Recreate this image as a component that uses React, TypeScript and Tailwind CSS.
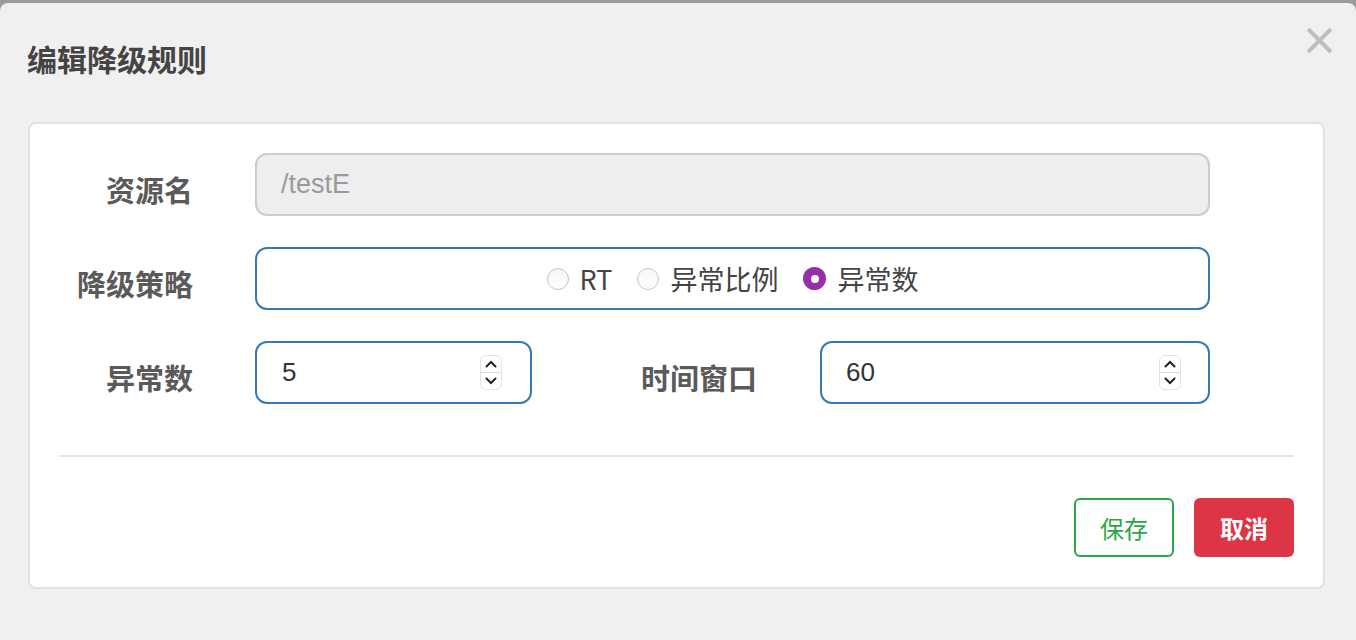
const cjk = { fontFamily: '"Noto Sans CJK SC", "Liberation Sans", sans-serif' }
const latin = { fontFamily: '"Liberation Sans", "Noto Sans CJK SC", sans-serif' }

function Radio({ checked, label }: { checked?: boolean; label: string }) {
  return (
    <label className="flex items-center gap-[11px]">
      {checked ? (
        <span className="flex h-[23px] w-[23px] items-center justify-center rounded-full bg-[#9630a9]">
          <span className="h-[8px] w-[8px] rounded-full bg-white" />
        </span>
      ) : (
        <span className="h-[22px] w-[22px] rounded-full border border-[#c4c4c4] bg-gradient-to-b from-[#f6f6f6] to-white" />
      )}
      <span className="text-[27px] leading-none text-[#444]" style={cjk}>
        {label}
      </span>
    </label>
  )
}

function Spinner() {
  return (
    <div className="flex h-[35px] w-[22px] flex-col overflow-hidden rounded-[6px] border border-[#e2e2e2] bg-white">
      <div className="flex flex-1 items-center justify-center border-b border-[#dcdcdc]">
        <svg width="12" height="8" viewBox="0 0 12 8" fill="none">
          <path d="M1.5 6.5 6 2l4.5 4.5" stroke="#222" strokeWidth="2" strokeLinecap="round" />
        </svg>
      </div>
      <div className="flex flex-1 items-center justify-center">
        <svg width="12" height="8" viewBox="0 0 12 8" fill="none">
          <path d="M1.5 1.5 6 6l4.5-4.5" stroke="#222" strokeWidth="2" strokeLinecap="round" />
        </svg>
      </div>
    </div>
  )
}

function Label({ text, width }: { text: string; width: string }) {
  return (
    <div className={`${width} shrink-0 pt-[10px] text-right text-[29px] font-bold leading-none text-[#5a5a5a]`} style={cjk}>
      {text}
    </div>
  )
}

export default function App() {
  return (
    <div className="min-h-[640px] bg-[#9b9b9b] pt-[3px]">
      <div className="relative h-[637px] rounded-t-[8px] bg-[#f0f0f0]">
        {/* close button */}
        <button className="absolute right-[24px] top-[25px]">
          <svg width="25" height="25" viewBox="0 0 25 25">
            <path d="M2.5 2.5l20 20M22.5 2.5l-20 20" stroke="#bdbdbd" strokeWidth="4" strokeLinecap="square" />
          </svg>
        </button>

        <div className="pl-[27px] pt-[40px]">
          <h4 className="text-[30px] font-bold leading-[30px] text-[#444]" style={cjk}>
            编辑降级规则
          </h4>
        </div>

        <div className="ml-[28px] mt-[49px] w-[1297px] rounded-[8px] border-2 border-[#e2e2e2] bg-white px-[29px] pb-[30px] pt-[29px]">
          <div className="flex flex-col gap-[31px]">
            <div className="flex items-center gap-[62px]">
              <Label text="资源名" width="w-[134px]" />
              <div
                className="flex h-[63px] w-[955px] items-center rounded-[12px] border-2 border-[#cccccc] bg-[#eeeeee] px-[24px] text-[27px] text-[#9a9a9a]"
                style={latin}
              >
                /testE
              </div>
            </div>

            <div className="flex items-center gap-[62px]">
              <Label text="降级策略" width="w-[134px]" />
              <div className="flex h-[63px] w-[955px] items-center justify-center gap-[25px] rounded-[12px] border-2 border-[#337ab7] bg-white">
                <Radio label="RT" />
                <Radio label="异常比例" />
                <Radio checked label="异常数" />
              </div>
            </div>

            <div className="flex items-center">
              <Label text="异常数" width="w-[134px]" />
              <div
                className="ml-[62px] flex h-[63px] w-[277px] items-center justify-between rounded-[12px] border-2 border-[#337ab7] bg-white pl-[25px] pr-[28px] text-[26px] text-[#333]"
                style={latin}
              >
                <span>5</span>
                <Spinner />
              </div>
              <Label text="时间窗口" width="w-[225px]" />
              <div
                className="ml-[63px] flex h-[63px] w-[390px] items-center justify-between rounded-[12px] border-2 border-[#337ab7] bg-white pl-[24px] pr-[27px] text-[26px] text-[#333]"
                style={latin}
              >
                <span>60</span>
                <Spinner />
              </div>
            </div>
          </div>

          <div className="mt-[51px] h-[2px] w-full bg-[#e5e5e5]" />

          <div className="mt-[41px] flex justify-end gap-[20px]">
            <button
              className="h-[59px] w-[100px] rounded-[6px] border-2 border-[#28a745] bg-white text-[24px] text-[#28a745]"
              style={cjk}
            >
              保存
            </button>
            <button
              className="h-[59px] w-[100px] rounded-[6px] bg-[#dc3545] text-[24px] font-bold text-white"
              style={cjk}
            >
              取消
            </button>
          </div>
        </div>
      </div>
    </div>
  )
}
